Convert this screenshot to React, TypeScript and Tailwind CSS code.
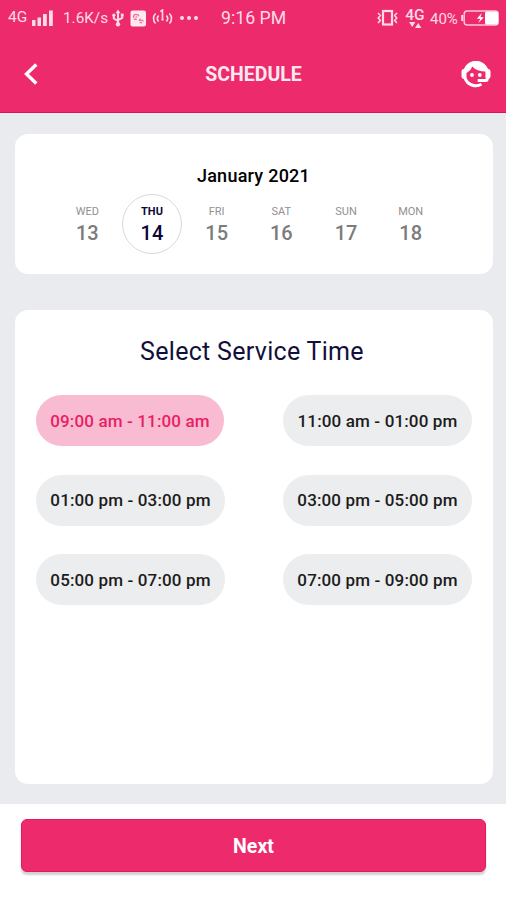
import clsx from "clsx";

const days = [
  { name: "WED", date: 13 },
  { name: "THU", date: 14 },
  { name: "FRI", date: 15 },
  { name: "SAT", date: 16 },
  { name: "SUN", date: 17 },
  { name: "MON", date: 18 },
];

const slots = [
  "09:00 am - 11:00 am",
  "11:00 am - 01:00 pm",
  "01:00 pm - 03:00 pm",
  "03:00 pm - 05:00 pm",
  "05:00 pm - 07:00 pm",
  "07:00 pm - 09:00 pm",
];

const SELECTED_DATE = 14;
const SELECTED_SLOT = slots[0];

function StatusBar() {
  return (
    <div className="flex h-9 items-center pl-2 pr-[7px] text-[15px] leading-none whitespace-nowrap text-[#ffdbe7]">
      <span className="w-6 text-[15.5px]">4G</span>
      {/* signal */}
      <svg width="21" height="17" viewBox="0 0 21 17" fill="currentColor">
        <rect x="0" y="10" width="3.5" height="6" />
        <rect x="5.5" y="7.5" width="3.5" height="8.5" />
        <rect x="11" y="4" width="3.8" height="12" />
        <rect x="17" y="0.5" width="3.8" height="15.5" />
      </svg>
      <span className="ml-[10px] w-[49px] pt-0.5 text-[15.3px]">1.6K/s</span>
      {/* usb */}
      <svg width="12" height="18" viewBox="0 0 12 18" fill="none" stroke="currentColor" strokeWidth="2">
        <path d="M6 3v12M1.8 6.5v3L6 12M10.2 6v2.8L6 11.2" />
        <path d="M6 0.5l2.5 3.8h-5z" fill="currentColor" stroke="none" />
        <circle cx="6" cy="15.3" r="2.2" fill="currentColor" stroke="none" />
        <circle cx="1.9" cy="6.2" r="1.6" fill="currentColor" stroke="none" />
        <rect x="8.8" y="4.6" width="2.8" height="2.8" fill="currentColor" stroke="none" />
      </svg>
      {/* app notification */}
      <svg className="ml-[6px]" width="17" height="17" viewBox="0 0 17 17">
        <rect x="0.5" y="0.5" width="15.5" height="16" rx="2" fill="#ffe9f0" />
        <path
          d="M3.5 8c-.3-2.8 1.3-4.2 3-3.3 1.3-.5 2.3.3 2.2 1.7M3.8 9.8l1.8-1 1 1.2M5.6 6.8l1.6.4M9 11l1.2-1.6 1.3 1.6M12.2 9.8l1.2 1.6M9.8 12.6h2.2"
          fill="none"
          stroke="#f0709b"
          strokeWidth="1.3"
        />
      </svg>
      {/* hotspot */}
      <svg className="ml-[5px]" width="21" height="18" viewBox="0 0 21 18" fill="none" stroke="currentColor" strokeWidth="1.6">
        <path d="M3.6 4.5C.8 7.2.8 11.8 3.6 14.5M6.6 6.5c-1.6 1.8-1.6 4.2 0 6M17.4 4.5c2.8 2.7 2.8 7.3 0 10M14.4 6.5c1.6 1.8 1.6 4.2 0 6" />
        <path d="M8.3 2.7l2.2-1.7v8.5" />
        <circle cx="10.5" cy="10.4" r="1.2" fill="currentColor" stroke="none" />
      </svg>
      <svg className="ml-[7px]" width="18" height="4" viewBox="0 0 18 4" fill="currentColor">
        <circle cx="2" cy="2" r="2" />
        <circle cx="9" cy="2" r="2" />
        <circle cx="16" cy="2" r="2" />
      </svg>
      <span className="ml-[23px] pt-0.5 text-[17.7px]">9:16 PM</span>

      {/* vibrate */}
      <svg className="ml-auto" width="21" height="18" viewBox="0 0 21 18" fill="none" stroke="currentColor">
        <rect x="6" y="2" width="9" height="13.5" strokeWidth="2.2" />
        <path d="M1 4l2.4 2.5L1.2 9l2.2 2.5L1 14M20 4l-2.4 2.5L19.8 9l-2.2 2.5L20 14" strokeWidth="1.5" />
      </svg>
      <span className="ml-[7px] flex w-[20px] flex-col items-center">
        <span className="text-[15.5px] leading-[13px] font-medium">4G</span>
        <svg width="14" height="6" viewBox="0 0 14 6" fill="currentColor">
          <path d="M1 0h6.4L4.2 5zM7 6H13.4L10.2 1z" />
        </svg>
      </span>
      <span className="ml-[5px] w-[31px] pt-0.5 text-[15px]">40%</span>
      {/* battery */}
      <svg width="38" height="16" viewBox="0 0 38 16" fill="none">
        <rect x="3.2" y="1" width="34" height="14" rx="3" stroke="#ffc4d7" strokeWidth="1.5" />
        <path d="M1.2 5v6" stroke="#ffdbe7" strokeWidth="2" />
        <rect x="24" y="1.5" width="13" height="13" rx="1.5" fill="#fff" />
        <path d="M20.8 3l-5 5.800h3.400L17.400 13l5.400-5.800h-3.400z" fill="#fff" />
      </svg>
    </div>
  );
}

function SupportIcon() {
  return (
    <svg width="30" height="28" viewBox="0 0 30 28" fill="none">
      {/* ear cups */}
      <rect x="0.5" y="9" width="5" height="10" rx="2.4" fill="#fff" />
      <rect x="24.5" y="9" width="5" height="10" rx="2.4" fill="#fff" />
      {/* head outline, open where the microphone sits */}
      <path d="M20.5 24.300A11.600 11.600 0 1 1 26.500 13.500" stroke="#fff" strokeWidth="3" />
      {/* hair */}
      <path d="M3.500 13.500C3.500 6 8.500 1 15 1S26.500 5.500 26.800 11.500c-7 .4-12.300-1.300-15.600-5C10.300 9.700 7.500 12.500 3.500 13.500z" fill="#fff" />
      <circle cx="11" cy="15" r="1.900" fill="#fff" />
      <circle cx="18.800" cy="15" r="1.900" fill="#fff" />
      <path d="M26.200 15v4c0 .9-.6 1.500-1.500 1.500h-8" stroke="#fff" strokeWidth="3" />
    </svg>
  );
}

function Header() {
  return (
    <header className="h-[113px] border-b border-[#dc1457] bg-[#ed2a6b] text-white">
      <StatusBar />
      <div className="flex h-[76px] items-center justify-between pr-[15px] pl-6">
        <button aria-label="Back" className="flex w-[22px]">
          <svg width="14" height="22" viewBox="0 0 14 22" fill="none">
            <path d="M12.300 1.500L2.500 11l9.800 9.500" stroke="#fff" strokeWidth="3.400" />
          </svg>
        </button>
        <h1 className="pt-0.5 text-[19.500px] font-bold text-[#ffe9f1]">SCHEDULE</h1>
        <button aria-label="Support">
          <SupportIcon />
        </button>
      </div>
    </header>
  );
}

function Calendar() {
  return (
    <section className="h-[140px] rounded-[13px] bg-white pt-[30px]">
      <h2 className="pr-px text-center text-[18px] leading-6 font-medium tracking-[0.250px] text-black">January 2021</h2>
      <div className="mt-[6px] flex justify-center pr-[10px]">
        {days.map(({ name, date }) => {
          const active = date === SELECTED_DATE;
          return (
            <div key={name} className="flex w-[64.700px] justify-center">
              <div
                className={clsx(
                  "flex size-[60px] shrink-0 flex-col items-center rounded-full border pt-[9px]",
                  active ? "border-[#d8d8d8] text-[#0d0838]" : "border-transparent text-[#7c7c7c]"
                )}
              >
                <span className={clsx("text-[11px] leading-4", active ? "font-bold" : "text-[#919191]")}>{name}</span>
                <span className="mt-px text-[20px] leading-6 font-medium">{date}</span>
              </div>
            </div>
          );
        })}
      </div>
    </section>
  );
}

function TimeSlots() {
  return (
    <section className="mt-9 h-[474px] rounded-[13px] bg-white px-[21px] pt-[26px]">
      <h2 className="pr-1 text-center text-[25px] leading-8 tracking-[0.300px] text-[#11103a]">Select Service Time</h2>
      <div className="mt-[27px] grid grid-cols-2 gap-y-[28.500px]">
        {slots.map((slot, i) => (
          <button
            key={slot}
            className={clsx(
              "h-[51px] rounded-full pt-0.5 text-[17px] font-medium tracking-[0.140px] whitespace-nowrap",
              i % 2 === 1 && "justify-self-end",
              slot === SELECTED_SLOT ? "w-[188px] bg-[#f9bbd1] text-[#e91e63]" : "w-[189px] bg-[#ecedee] text-[#1c1c1c]"
            )}
          >
            {slot}
          </button>
        ))}
      </div>
    </section>
  );
}

export default function App() {
  return (
    <div className="flex h-[900px] w-[506px] flex-col overflow-hidden bg-[#e9ebee] font-['Roboto',sans-serif]">
      <Header />
      <main className="flex-1 pt-[21px] pr-[13px] pl-[15px]">
        <Calendar />
        <TimeSlots />
      </main>
      <footer className="h-24 bg-white pt-[15px] pr-[20px] pl-[21px]">
        <button className="h-[53px] w-full rounded-[6px] border border-[#e31a60] bg-[#ed2a6b] pt-[3px] text-[19.500px] font-bold text-white shadow-[0_3px_2px_rgba(0,0,0,0.180)]">
          Next
        </button>
      </footer>
    </div>
  );
}
